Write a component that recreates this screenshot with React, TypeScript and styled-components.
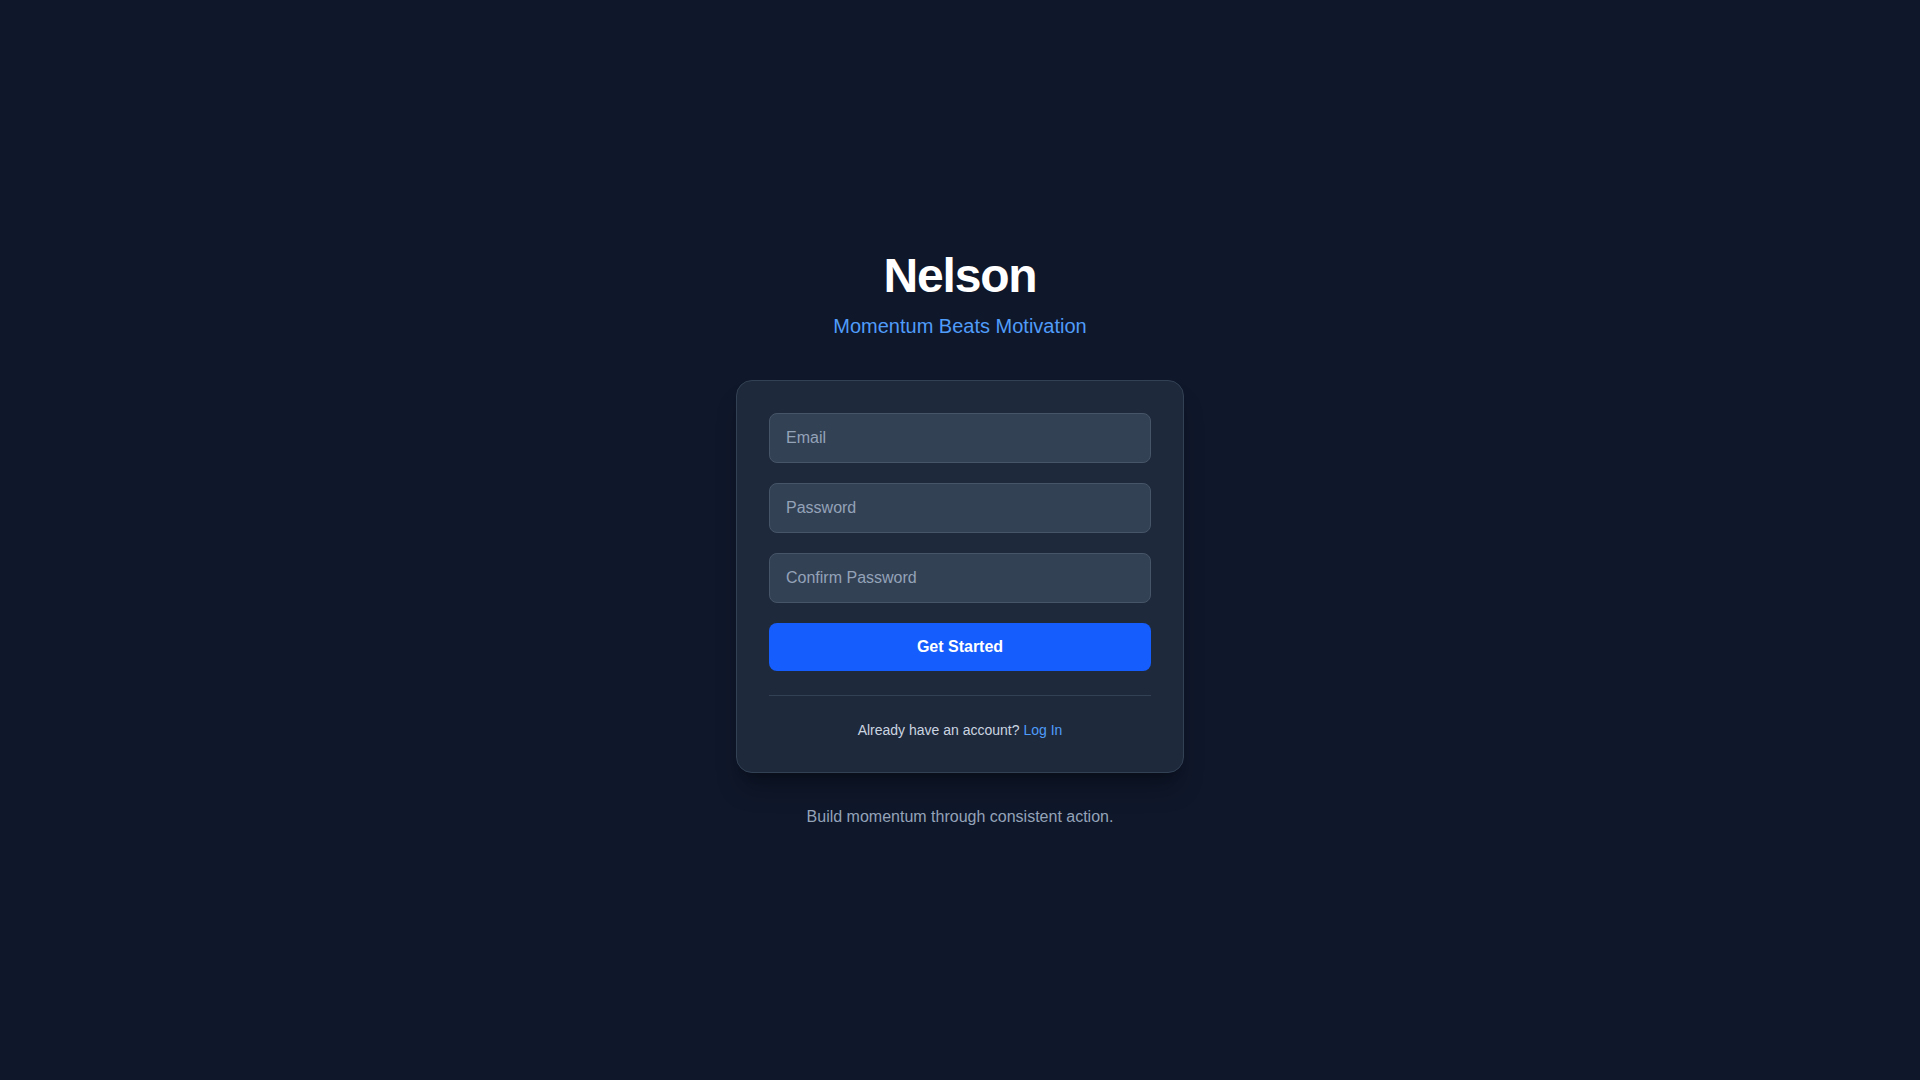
import React from 'react';
import styled, { createGlobalStyle } from 'styled-components';

const GlobalStyle = createGlobalStyle`
    html, body {
        margin: 0;
        padding: 0;
        background-color: #0f172a;
    }

    * {
        box-sizing: border-box;
    }

    body {
        font-family: "Liberation Sans", Arial, sans-serif;
    }
`;

export default function App() {
    return (
        <>
            <GlobalStyle />
            <Page>
                <Wrapper>
                    <Header>
                        <Title>Nelson</Title>
                        <Tagline>Momentum Beats Motivation</Tagline>
                    </Header>
                    <Card>
                        <Form onSubmit={(e) => e.preventDefault()}>
                            <Input type="email" placeholder="Email" />
                            <Input type="password" placeholder="Password" />
                            <Input type="password" placeholder="Confirm Password" />
                            <SubmitButton type="submit">Get Started</SubmitButton>
                        </Form>
                        <Divider />
                        <SwitchText>
                            Already have an account? <SwitchLink href="#">Log In</SwitchLink>
                        </SwitchText>
                    </Card>
                    <Footer>Build momentum through consistent action.</Footer>
                </Wrapper>
            </Page>
        </>
    );
}

const Page = styled.div`
    min-height: 100vh;
    display: flex;
    align-items: center;
    justify-content: center;
    background-color: #0f172a;
`;

const Wrapper = styled.div`
    width: 448px;
    display: flex;
    flex-direction: column;
    align-items: stretch;
`;

const Header = styled.div`
    text-align: center;
    margin-bottom: 40px;
`;

const Title = styled.h1`
    margin: 1px 0 0;
    font-size: 48px;
    line-height: 48px;
    font-weight: 700;
    color: #ffffff;
    letter-spacing: -1.2px;
`;

const Tagline = styled.p`
    margin: 12px 0 0;
    font-size: 20px;
    line-height: 28px;
    color: #4f9cf9;
`;

const Card = styled.div`
    background-color: #1e293b;
    border: 1px solid #334155;
    border-radius: 16px;
    padding: 32px;
    box-shadow: 0 20px 25px -5px rgba(0, 0, 0, 0.25), 0 8px 10px -6px rgba(0, 0, 0, 0.2);
`;

const Form = styled.form`
    display: flex;
    flex-direction: column;
    gap: 20px;
`;

const Input = styled.input`
    width: 100%;
    height: 50px;
    padding: 0 16px;
    background-color: #334155;
    border: 1px solid #475569;
    border-radius: 8px;
    color: #f1f5f9;
    font-family: "Liberation Sans", Arial, sans-serif;
    font-size: 16px;
    outline: none;

    &::placeholder {
        color: #94a3b8;
    }
`;

const SubmitButton = styled.button`
    height: 48px;
    border: none;
    border-radius: 8px;
    background-color: #155dfc;
    color: #ffffff;
    font-family: "Liberation Sans", Arial, sans-serif;
    font-size: 16px;
    font-weight: 700;
    cursor: pointer;
`;

const Divider = styled.hr`
    margin: 24px 0 0;
    border: none;
    border-top: 1px solid #334155;
`;

const SwitchText = styled.p`
    margin: 24px 0 0;
    text-align: center;
    font-size: 14px;
    line-height: 20px;
    color: #cbd5e1;
`;

const SwitchLink = styled.a`
    color: #4f9cf9;
    text-decoration: none;
`;

const Footer = styled.p`
    margin: 32px 0 0;
    text-align: center;
    font-size: 16px;
    line-height: 24px;
    color: #94a3b8;
`;
